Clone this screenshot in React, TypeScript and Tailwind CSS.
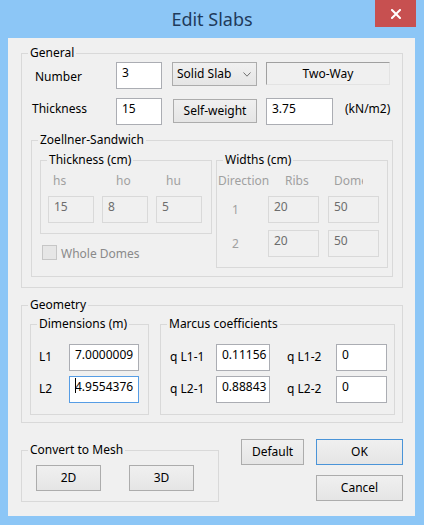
import type { ReactNode } from "react";

function Group({
  label,
  className,
  children,
}: {
  label: string;
  className: string;
  children?: ReactNode;
}) {
  return (
    <div className={`flex flex-col items-start border border-[#d9d9d9] ${className}`}>
      <div className="-mt-[9px] ml-[6px] h-[16px] w-fit bg-[#f0f0f0] px-[2px] leading-[16px] whitespace-nowrap">
        {label}
      </div>
      {children}
    </div>
  );
}

function Field({
  value,
  className = "",
  disabled,
  focused,
}: {
  value: string;
  className?: string;
  disabled?: boolean;
  focused?: boolean;
}) {
  const tone = disabled
    ? "border-[#d9d9d9] bg-[#f0f0f0] text-[#6d6d6d]"
    : focused
      ? "border-[#569de5] bg-white"
      : "border-[#abadb3] bg-white";
  return (
    <div className={`flex h-[27px] shrink-0 items-start border pl-[5px] pt-[2px] whitespace-nowrap ${tone} ${className}`}>
      {focused && <span className="mt-[-1px] h-[15px] w-px shrink-0 bg-black" />}
      <span className={focused ? "-ml-px" : ""}>{value}</span>
    </div>
  );
}

function Btn({
  children,
  className,
  focused,
}: {
  children: ReactNode;
  className: string;
  focused?: boolean;
}) {
  return (
    <button
      type="button"
      className={`flex shrink-0 items-center justify-center border bg-linear-to-b from-[#f0f0f0] to-[#e5e5e5] ${
        focused ? "border-[#4a94d8]" : "border-[#acacac]"
      } ${className}`}
    >
      {children}
    </button>
  );
}

export default function App() {
  return (
    <div className="h-[525px] w-[424px] bg-[#8cc6f6] font-['Noto_Sans',sans-serif] text-[12px] leading-[16px] text-black">
      {/* title bar */}
      <div className="grid h-[38px] grid-cols-[1fr_auto_1fr]">
        <div />
        <div className="pt-[7px] text-[18px] leading-[24px] text-[#1f3b5c]">Edit Slabs</div>
        <div className="flex justify-end pr-[8px]">
          <button type="button" className="flex h-[27px] w-[41px] items-center justify-center bg-[#c75050]">
            <svg width="10" height="10" viewBox="0 0 10 10">
              <path d="M1 1 L9 9 M9 1 L1 9" stroke="white" strokeWidth="2" strokeLinecap="square" />
            </svg>
          </button>
        </div>
      </div>

      {/* client area */}
      <div className="ml-[8px] flex h-[478px] w-[407px] flex-col items-start bg-[#f0f0f0] pl-[13px]">
        <Group label="General" className="mt-[15px] h-[235px] w-[382px]">
          <div className="mt-[1px] flex h-[27px] items-start">
            <div className="ml-[13px] mt-[7px] w-[81px]">Number</div>
            <Field value="3" className="w-[46px]" />
            <div className="ml-[10px] flex h-[24px] w-[85px] items-center border border-[#acacac] bg-linear-to-b from-[#f0f0f0] to-[#e5e5e5] pl-[4px] pr-[5px]">
              <span className="flex-1">Solid Slab</span>
              <svg width="8" height="5" viewBox="0 0 8 5">
                <polyline points="0.5,0.5 4,4.2 7.5,0.5" fill="none" stroke="#707070" strokeWidth="1" />
              </svg>
            </div>
            <div className="ml-[9px] flex h-[23px] w-[124px] items-center justify-center border border-t-[#a0a0a0] border-r-[#e3e3e3] border-b-[#e3e3e3] border-l-[#a0a0a0]">
              Two-Way
            </div>
          </div>
          <div className="mt-[9px] flex h-[27px] items-start">
            <div className="ml-[10px] mt-[3px] w-[84px]">Thickness</div>
            <Field value="15" className="w-[46px]" />
            <Btn className="ml-[11px] mt-[1px] h-[24px] w-[84px]">Self-weight</Btn>
            <Field value="3.75" className="ml-[9px] w-[67px]" />
            <div className="ml-[12px] mt-[3px]">(kN/m2)</div>
          </div>

          <Group label="Zoellner-Sandwich" className="ml-[9px] mt-[15px] h-[137px] w-[362px]">
            <div className="mt-[12px] flex items-start">
              <div className="ml-[8px] flex flex-col items-start">
                <Group label="Thickness (cm)" className="h-[74px] w-[172px]">
                  <div className="ml-[7px] mt-[5px] grid grid-cols-[46px_46px_46px] gap-x-[8px] text-[#a0a0a0]">
                    <span className="ml-[5px]">hs</span>
                    <span className="ml-[14px]">ho</span>
                    <span className="ml-[10px]">hu</span>
                  </div>
                  <div className="ml-[7px] mt-[7px] flex gap-[8px]">
                    <Field disabled value="15" className="w-[46px]" />
                    <Field disabled value="8" className="w-[46px]" />
                    <Field disabled value="5" className="w-[46px]" />
                  </div>
                </Group>
                <div className="ml-[2px] mt-[11px] flex items-start">
                  <div className="h-[15px] w-[15px] border border-[#c6c6c6] bg-[#e6e6e6]" />
                  <span className="ml-[4px] mt-[1px] text-[#8a8a8a]">Whole Domes</span>
                </div>
              </div>

              <Group label="Widths (cm)" className="ml-[4px] h-[108px] w-[172px]">
                <div className="mt-[5px] flex text-[#a0a0a0]">
                  <span className="ml-[1px] w-[50px] whitespace-nowrap">Direction</span>
                  <span className="w-[60px] pl-[17px]">Ribs</span>
                  <span className="ml-[6px] w-[29px] overflow-hidden whitespace-nowrap">Dome</span>
                </div>
                {[
                  ["1", "20", "50"],
                  ["2", "20", "50"],
                ].map(([dir, ribs, dome]) => (
                  <div key={dir} className="mt-[7px] flex items-start">
                    <span className="ml-[15px] mt-[6px] w-[36px] text-[#a0a0a0]">{dir}</span>
                    <Field disabled value={ribs} className="w-[51px]" />
                    <Field disabled value={dome} className="ml-[9px] w-[51px]" />
                  </div>
                ))}
              </Group>
            </div>
          </Group>
        </Group>

        <Group label="Geometry" className="mt-[17px] h-[118px] w-[382px]">
          <div className="mt-[11px] flex items-start">
            <Group label="Dimensions (m)" className="ml-[8px] h-[91px] w-[119px]">
              <div className="mt-[12px] flex items-start">
                <span className="ml-[8px] mt-[5px] w-[30px]">L1</span>
                <Field value="7.0000009" className="w-[70px]" />
              </div>
              <div className="mt-[5px] flex items-start">
                <span className="ml-[8px] mt-[5px] w-[30px]">L2</span>
                <Field focused value="4.9554376" className="w-[70px]" />
              </div>
            </Group>
            <Group label="Marcus coefficients" className="ml-[11px] h-[91px] w-[235px]">
              <div className="mt-[12px] flex items-start">
                <span className="ml-[9px] mt-[5px] w-[46px]">q L1-1</span>
                <Field value="0.11156" className="w-[54px]" />
                <span className="ml-[17px] mt-[5px] w-[49px]">q L1-2</span>
                <Field value="0" className="w-[51px]" />
              </div>
              <div className="mt-[5px] flex items-start">
                <span className="ml-[9px] mt-[5px] w-[46px]">q L2-1</span>
                <Field value="0.88843" className="w-[54px]" />
                <span className="ml-[17px] mt-[5px] w-[49px]">q L2-2</span>
                <Field value="0" className="w-[51px]" />
              </div>
            </Group>
          </div>
        </Group>

        <div className="mt-[16px] flex items-start">
          <Group label="Convert to Mesh" className="mt-[11px] h-[52px] w-[198px]">
            <div className="ml-[14px] mt-[7px] flex">
              <Btn className="h-[26px] w-[65px]">2D</Btn>
              <Btn className="ml-[28px] h-[26px] w-[65px]">3D</Btn>
            </div>
          </Group>
          <Btn className="ml-[22px] h-[26px] w-[63px]">Default</Btn>
          <div className="ml-[12px] flex flex-col">
            <Btn focused className="h-[26px] w-[87px]">
              OK
            </Btn>
            <Btn className="mt-[10px] h-[26px] w-[87px]">Cancel</Btn>
          </div>
        </div>
      </div>
    </div>
  );
}
